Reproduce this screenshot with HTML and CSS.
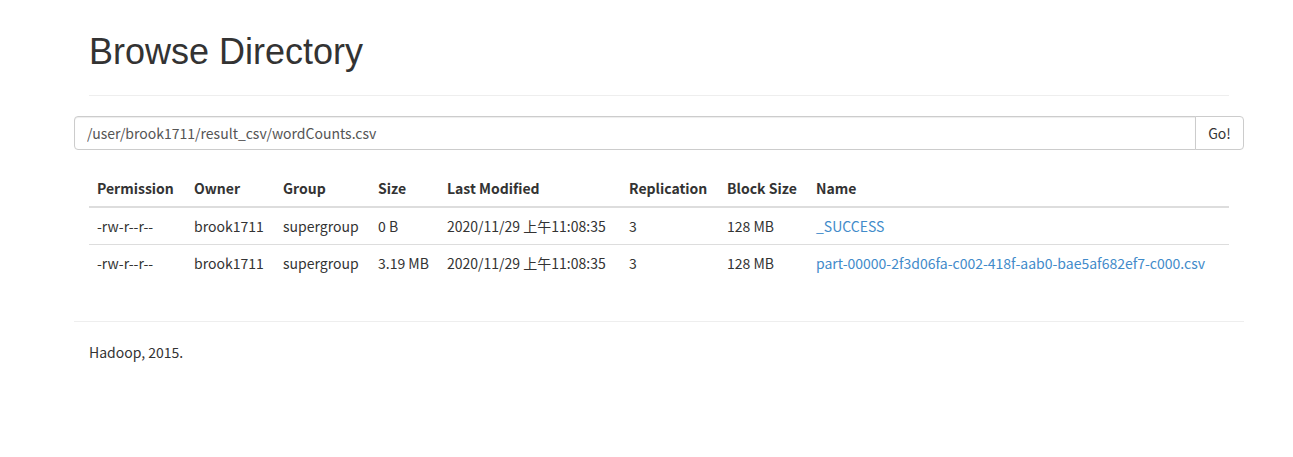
FILE: index.html
```html
<!DOCTYPE html>
<html>
<head>
<meta charset="utf-8">
<title>Browsing HDFS</title>
<link rel="stylesheet" href="styles.css">
</head>
<body>
<div class="container">
  <div class="page-header">
    <h1>Browse Directory</h1>
  </div>
  <form class="input-group">
    <input class="form-control" type="text" value="/user/brook1711/result_csv/wordCounts.csv">
    <button class="btn" type="button">Go!</button>
  </form>
  <table class="table">
    <colgroup>
      <col class="c-perm"><col class="c-owner"><col class="c-group"><col class="c-size"><col class="c-mod"><col class="c-rep"><col class="c-block"><col class="c-name">
    </colgroup>
    <thead>
      <tr>
        <th>Permission</th><th>Owner</th><th>Group</th><th>Size</th><th>Last Modified</th><th>Replication</th><th>Block Size</th><th>Name</th>
      </tr>
    </thead>
    <tbody>
      <tr>
        <td>-rw-r--r--</td><td>brook1711</td><td>supergroup</td><td>0 B</td><td>2020/11/29 上午11:08:35</td><td>3</td><td>128 MB</td><td><a href="#">_SUCCESS</a></td>
      </tr>
      <tr>
        <td>-rw-r--r--</td><td>brook1711</td><td>supergroup</td><td>3.19 MB</td><td>2020/11/29 上午11:08:35</td><td>3</td><td>128 MB</td><td><a href="#">part-00000-2f3d06fa-c002-418f-aab0-bae5af682ef7-c000.csv</a></td>
      </tr>
    </tbody>
  </table>
  <hr class="footer-rule">
  <div class="footer">
    <p>Hadoop, 2015.</p>
  </div>
</div>
</body>
</html>
```

FILE: styles.css
```css
html, body {
  margin: 0;
  padding: 0;
  background: #fff;
}
body {
  font-family: "Noto Sans CJK SC", "Source Sans Pro", "Open Sans", sans-serif;
  font-size: 14px;
  line-height: 20px;
  color: #333;
}
.container {
  width: 1170px;
  margin: 0 0 0 74px;
}
.page-header {
  margin: 0 15px;
  padding-top: 32px;
  padding-bottom: 23px;
  border-bottom: 1px solid #eee;
}
.page-header h1 {
  margin: 0;
  font-family: "Liberation Sans", Arial, sans-serif;
  font-size: 36px;
  font-weight: 400;
  line-height: 40px;
  color: #333;
}
.input-group {
  display: flex;
  margin: 20px 0 0 0;
  height: 34px;
}
.form-control {
  flex: 1;
  box-sizing: border-box;
  height: 34px;
  margin: 0;
  padding: 6px 12px;
  font-family: inherit;
  font-size: 14px;
  line-height: 20px;
  color: #555;
  background: #fff;
  border: 1px solid #ccc;
  border-radius: 4px 0 0 4px;
  box-shadow: inset 0 1px 1px rgba(0,0,0,.075);
  outline: none;
}
.btn {
  box-sizing: border-box;
  width: 49px;
  height: 34px;
  margin: 0 0 0 -1px;
  padding: 6px 12px;
  font-family: inherit;
  font-size: 14px;
  line-height: 20px;
  color: #333;
  background: #fff;
  border: 1px solid #ccc;
  border-radius: 0 4px 4px 0;
}
.table {
  width: 1140px;
  margin: 20px 15px 40px 15px;
  border-collapse: collapse;
  border-spacing: 0;
}
.table th,
.table td {
  padding: 8px;
  text-align: left;
  vertical-align: top;
  line-height: 20px;
  white-space: nowrap;
}
.table th {
  font-weight: 700;
  border-bottom: 2px solid #ddd;
}
.table td {
  border-top: 1px solid #ddd;
}
.table a {
  color: #428bca;
  text-decoration: none;
}
.c-perm { width: 97px; }
.c-owner { width: 89px; }
.c-group { width: 95px; }
.c-size { width: 69px; }
.c-mod { width: 182px; }
.c-rep { width: 98px; }
.c-block { width: 89px; }
.c-name { width: auto; }
.footer-rule {
  margin: 20px 0;
  border: 0;
  border-top: 1px solid #eee;
  height: 0;
}
.footer {
  padding: 0 15px;
}
.footer p {
  margin: 0 0 10px;
}
```
